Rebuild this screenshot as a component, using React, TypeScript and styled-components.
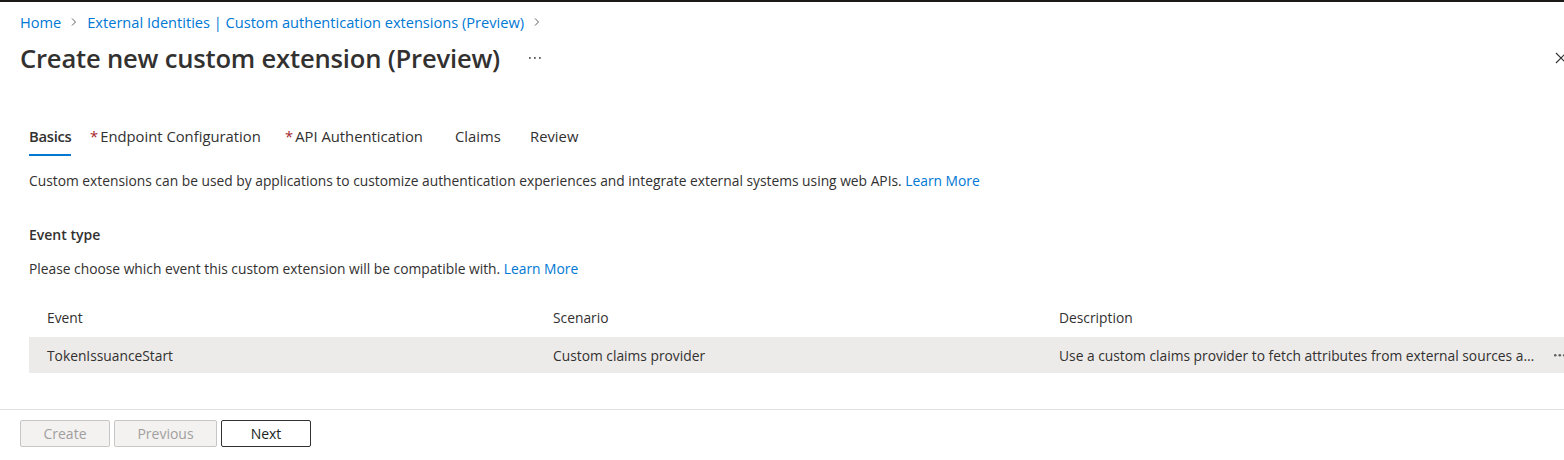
import React from "react";
import styled, { createGlobalStyle } from "styled-components";

const Global = createGlobalStyle`
  html, body { margin: 0; padding: 0; background: #fff; }
  body { font-family: "Open Sans", "Noto Sans", Arial, sans-serif; color: #323130; font-size: 14px; }
  * { box-sizing: border-box; }
`;

const Page = styled.div`
  width: 1564px;
  height: 460px;
  border-top: 2px solid #1b1a19;
  display: flex;
  flex-direction: column;
  overflow: hidden;
`;

const Header = styled.div`
  padding: 10px 0 0 20px;
  display: flex;
  flex-direction: column;
`;

const Breadcrumb = styled.nav`
  display: flex;
  align-items: center;
  gap: 9px;
  height: 19px;
  font-size: 14.6px;
  color: #0078d4;
  white-space: nowrap;
`;

const Chevron = styled.span`
  display: inline-flex;
`;

const TitleRow = styled.div`
  display: flex;
  align-items: center;
  height: 40px;
  margin-top: 7px;
`;

const Title = styled.h1`
  margin: 0;
  font-size: 25.6px;
  font-weight: 600;
  color: #323130;
  letter-spacing: -0.2px;
  white-space: nowrap;
`;

const Dots = styled.span<{ $ml: number }>`
  margin-left: ${(p) => p.$ml}px;
  display: inline-flex;
  align-items: center;
`;

const Close = styled.span`
  margin-left: auto;
  display: inline-flex;
  margin-right: -3px;
`;

const Body = styled.div`
  padding: 43px 0 0 29px;
  display: flex;
  flex-direction: column;
  flex: 1;
`;

const Tabs = styled.div`
  display: flex;
  height: 35px;
`;

const Tab = styled.div<{ $active?: boolean; $w: number }>`
  position: relative;
  width: ${(p) => p.$w}px;
  font-size: 14.8px;
  font-weight: ${(p) => (p.$active ? 600 : 400)};
  letter-spacing: ${(p) => (p.$active ? "-0.3px" : "0")};
  color: #323130;
  padding-top: 5px;
  white-space: nowrap;
  &::after {
    content: "";
    display: ${(p) => (p.$active ? "block" : "none")};
    position: absolute;
    left: 0;
    width: 42px;
    bottom: 0;
    height: 2px;
    background: #0078d4;
  }
`;

const Req = styled.span`
  color: #a4262c;
  margin-right: 2px;
`;

const Para = styled.p<{ $mt: number }>`
  margin: ${(p) => p.$mt}px 0 0 0;
  font-size: 13.8px;
  line-height: 20px;
  color: #323130;
  white-space: nowrap;
`;

const Link = styled.a`
  color: #0078d4;
  text-decoration: none;
`;

const SectionTitle = styled.h2`
  margin: 34px 0 0 0;
  font-size: 14px;
  line-height: 20px;
  font-weight: 600;
  color: #323130;
`;

const Table = styled.div`
  margin-top: 18px;
  display: flex;
  flex-direction: column;
`;

const Row = styled.div<{ $selected?: boolean }>`
  display: grid;
  grid-template-columns: 506px 506px 495px 1fr;
  align-items: center;
  height: ${(p) => (p.$selected ? 36 : 40)}px;
  background: ${(p) => (p.$selected ? "#edebe9" : "transparent")};
`;

const Cell = styled.div`
  padding-left: 18px;
  font-size: 13.8px;
  color: #323130;
  white-space: nowrap;
  overflow: hidden;
  text-overflow: ellipsis;
`;

const RowMore = styled.div`
  display: flex;
  align-items: center;
  padding-left: 17px;
`;

const Footer = styled.div`
  border-top: 1px solid #e1dfdd;
  padding: 10px 0 0 20px;
  height: 51px;
  display: flex;
  gap: 4px;
`;

const Button = styled.button<{ $disabled?: boolean; $w: number }>`
  width: ${(p) => p.$w}px;
  height: 27px;
  font-family: inherit;
  font-size: 14px;
  padding: 0;
  border-radius: 2px;
  border: 1px solid ${(p) => (p.$disabled ? "#c8c6c4" : "#323130")};
  background: ${(p) => (p.$disabled ? "#f3f2f1" : "#fff")};
  color: ${(p) => (p.$disabled ? "#a19f9d" : "#201f1e")};
  font-weight: 400;
`;

const ChevronIcon = () => (
  <svg width="8" height="12" viewBox="0 0 8 12">
    <path d="M2 2.5 L5.5 6 L2 9.5" stroke="#605e5c" strokeWidth="1" fill="none" />
  </svg>
);

const XIcon = () => (
  <svg width="12" height="12" viewBox="0 0 12 12">
    <path d="M1 1 L11 11 M11 1 L1 11" stroke="#323130" strokeWidth="1.1" fill="none" />
  </svg>
);

const DotsIcon = ({ gap, r, color }: { gap: number; r: number; color: string }) => (
  <svg width={gap * 2 + r * 2 + 2} height={r * 2 + 2} viewBox={`0 0 ${gap * 2 + r * 2 + 2} ${r * 2 + 2}`}>
    {[0, 1, 2].map((i) => (
      <circle key={i} cx={r + 1 + i * gap} cy={r + 1} r={r} fill={color} />
    ))}
  </svg>
);

export default function App() {
  return (
    <>
      <Global />
      <Page>
        <Header>
          <Breadcrumb>
            <span>Home</span>
            <Chevron><ChevronIcon /></Chevron>
            <span>External Identities | Custom authentication extensions (Preview)</span>
            <Chevron><ChevronIcon /></Chevron>
          </Breadcrumb>
          <TitleRow>
            <Title>Create new custom extension (Preview)</Title>
            <Dots $ml={28}><DotsIcon gap={5} r={0.9} color="#323130" /></Dots>
            <Close><XIcon /></Close>
          </TitleRow>
        </Header>
        <Body>
          <Tabs>
            <Tab $active $w={61}>Basics</Tab>
            <Tab $w={195}><Req>*</Req>Endpoint Configuration</Tab>
            <Tab $w={170}><Req>*</Req>API Authentication</Tab>
            <Tab $w={75}>Claims</Tab>
            <Tab $w={80}>Review</Tab>
          </Tabs>
          <Para $mt={15}>
            Custom extensions can be used by applications to customize authentication experiences and integrate external systems using web APIs. <Link>Learn More</Link>
          </Para>
          <SectionTitle>Event type</SectionTitle>
          <Para $mt={14}>
            Please choose which event this custom extension will be compatible with. <Link>Learn More</Link>
          </Para>
          <Table>
            <Row>
              <Cell>Event</Cell>
              <Cell>Scenario</Cell>
              <Cell>Description</Cell>
              <div />
            </Row>
            <Row $selected>
              <Cell>TokenIssuanceStart</Cell>
              <Cell>Custom claims provider</Cell>
              <Cell>Use a custom claims provider to fetch attributes from external sources and add them to the token.</Cell>
              <RowMore><DotsIcon gap={4.5} r={1.3} color="#605e5c" /></RowMore>
            </Row>
          </Table>
        </Body>
        <Footer>
          <Button $disabled $w={90}>Create</Button>
          <Button $disabled $w={103}>Previous</Button>
          <Button $w={90}>Next</Button>
        </Footer>
      </Page>
    </>
  );
}
